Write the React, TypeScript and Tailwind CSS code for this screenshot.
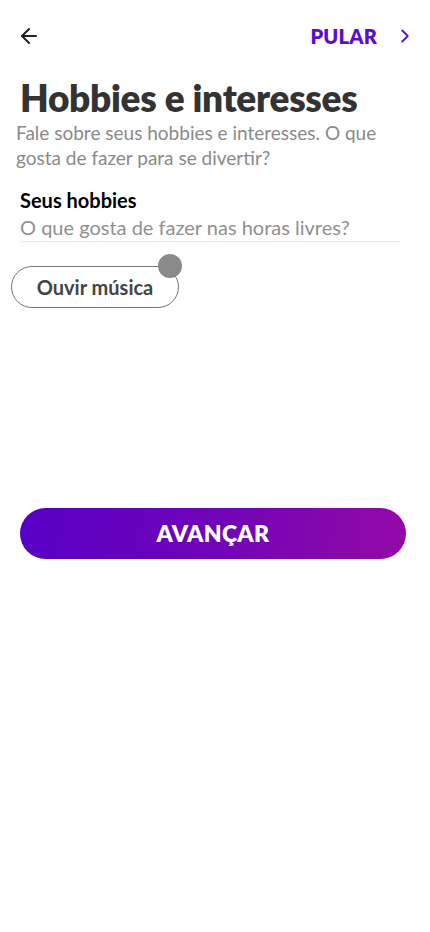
import React from 'react';
import { ArrowLeft, ChevronRight } from 'lucide-react';

export default function App() {
  return (
    <div className="w-[430px] h-[932px] bg-white font-['Lato','Noto_Sans',sans-serif]">
      {/* Top bar */}
      <div className="flex items-center justify-between pl-[17px] pr-[14px] pt-[22px] h-[50px]">
        <ArrowLeft className="w-[24px] h-[24px] text-[#222]" strokeWidth={2} />
        <div className="flex items-center gap-[17px]">
          <span className="text-[20px] font-extrabold text-[#5a0fcf] tracking-[0.2px]">PULAR</span>
          <ChevronRight className="w-[22px] h-[22px] text-[#5a0fcf]" strokeWidth={2} />
        </div>
      </div>

      {/* Heading */}
      <div className="px-[16px] mt-[26px]">
        <h1 className="pl-[4px] text-[37px] leading-[44px] font-extrabold text-[#333] tracking-[-0.3px]">
          Hobbies e interesses
        </h1>
        <p className="text-[19px] leading-[25px] text-[#8a8a8a] pr-[20px]">
          Fale sobre seus hobbies e interesses. O que gosta de fazer para se divertir?
        </p>
      </div>

      {/* Hobbies field */}
      <div className="pl-[20px] pr-[30px] mt-[17px]">
        <label className="block text-[20px] leading-[27px] font-bold text-black">Seus hobbies</label>
        <div className="border-b border-[#e6e6e6]">
          <span className="block text-[20px] leading-[27px] text-[#909090]">
            O que gosta de fazer nas horas livres?
          </span>
        </div>
      </div>

      {/* Chips */}
      <div className="px-[11px] mt-[24px] flex">
        <div className="relative">
          <div className="h-[42px] w-[168px] rounded-full border border-[#777] flex items-center justify-center">
            <span className="text-[20px] font-bold text-[#444]">Ouvir música</span>
          </div>
          <div className="absolute -top-[12px] -right-[3px] w-[24px] h-[24px] rounded-full bg-[#8a8a8a]" />
        </div>
      </div>

      {/* Next button */}
      <div className="pl-[20px] pr-[24px] mt-[200px]">
        <button className="w-full h-[51px] rounded-full bg-[linear-gradient(100deg,#5700c6_0%,#7004b8_50%,#940aa6_100%)] flex items-center justify-center">
          <span className="text-[23px] font-extrabold text-white tracking-[0.3px]">AVANÇAR</span>
        </button>
      </div>
    </div>
  );
}
